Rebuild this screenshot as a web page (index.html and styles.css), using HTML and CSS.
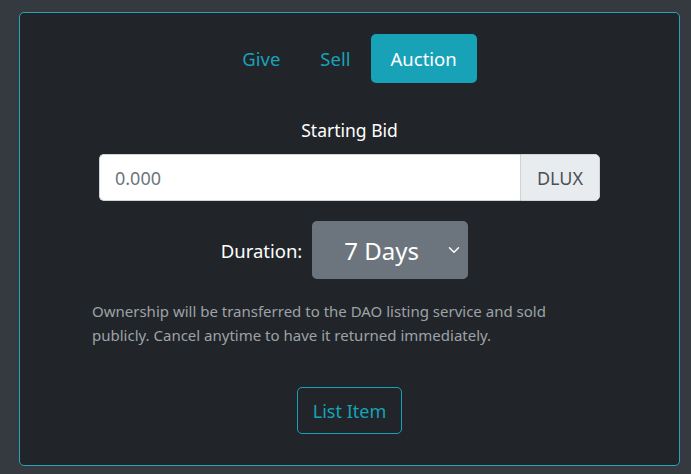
FILE: index.html
```html
<!DOCTYPE html>
<html>
<head>
 <title>List Item</title>
 <link rel="stylesheet" href="styles.css">
</head>
<body>
 <div class="card">
 <ul class="tabs">
 <li><a href="#" class="tab">Give</a></li>
 <li><a href="#" class="tab">Sell</a></li>
 <li><a href="#" class="tab active">Auction</a></li>
 </ul>
 <form id="AuctionForm">
 <label for="bid" class="bid-label">Starting Bid</label>
 <div class="input-group">
 <input type="number" id="bid" name="bid" min="0" step="0.001" placeholder="0.000">
 <span class="addon">DLUX</span>
 </div>
 <div class="duration-row">
 <label for="days">Duration:</label>
 <div class="select-wrap">
 <select id="days" name="days">
 <option value="1">1 Day</option>
 <option value="3">3 Days</option>
 <option value="7" selected>7 Days</option>
 <option value="14">14 Days</option>
 <option value="30">30 Days</option>
 </select>
 <svg class="chevron" width="12" height="12" viewBox="0 0 16 16"><path d="M2 5l6 6 6-6" fill="none" stroke="#fff" stroke-width="2" stroke-linecap="round" stroke-linejoin="round"/></svg>
 </div>
 </div>
 <p class="note">Ownership will be transferred to the DAO listing service and sold publicly. Cancel anytime to have it returned immediately.</p>
 <div class="submit-row">
 <button type="submit" class="btn-outline">List Item</button>
 </div>
 </form>
 </div>
</body>
</html>
```

FILE: styles.css
```css
/* page */
body {
font-family: "Noto Sans", Arial, sans-serif;
margin: 0;
padding: 12px 11px 10px 19px;
background-color: #343a40;
color: #fff;
}
.card {
background-color: #212529;
border: 1px solid #2aa3b5;
border-radius: 5px;
padding: 21px 20px 31px 20px;
box-sizing: border-box;
}
/* tabs */
.tabs {
list-style: none;
margin: 0;
padding: 0;
display: flex;
justify-content: center;
gap: 0;
}
.tab {
display: block;
padding: 9px 20px;
font-size: 18.5px;
line-height: 31px;
color: #17a2b8;
text-decoration: none;
border-radius: 5px;
}
.tab.active {
background-color: #17a2b8;
color: #fff;
}
/* form */
form {
display: flex;
flex-direction: column;
align-items: center;
}
.bid-label {
margin-top: 34px;
font-size: 17.5px;
line-height: 26px;
}
.input-group {
display: flex;
width: 501px;
height: 47px;
margin-top: 11px;
}
.input-group input {
flex: 1;
border: 1px solid #ced4da;
border-right: none;
border-radius: 5px 0 0 5px;
padding: 0 15px;
font-family: inherit;
font-size: 18px;
color: #495057;
outline: none;
-moz-appearance: textfield;
}
.input-group input::placeholder {
color: #6c757d;
}
.addon {
display: flex;
align-items: center;
padding: 0 16px;
font-size: 18px;
background-color: #e9ecef;
color: #495057;
border: 1px solid #ced4da;
border-radius: 0 5px 5px 0;
}
.duration-row {
display: flex;
align-items: center;
gap: 10px;
margin-top: 20px;
}
.duration-row label {
font-size: 18.5px;
}
.select-wrap {
position: relative;
margin-right: 10px;
}
.select-wrap select {
appearance: none;
-webkit-appearance: none;
width: 156px;
height: 58px;
padding: 0 30px 0 32px;
font-family: inherit;
font-size: 24px;
color: #fff;
background-color: #6c757d;
border: none;
border-radius: 5px;
outline: none;
}
.chevron {
position: absolute;
right: 8px;
top: 23px;
pointer-events: none;
}
.note {
align-self: flex-start;
margin: 20px 0 0 52px;
width: 480px;
font-size: 15px;
line-height: 24px;
color: #9ea2a7;
}
.submit-row {
margin-top: 40px;
}
.btn-outline {
padding: 0 15px;
height: 47px;
font-family: inherit;
font-size: 18px;
color: #17a2b8;
background: transparent;
border: 1px solid #17a2b8;
border-radius: 5px;
cursor: pointer;
}
```
